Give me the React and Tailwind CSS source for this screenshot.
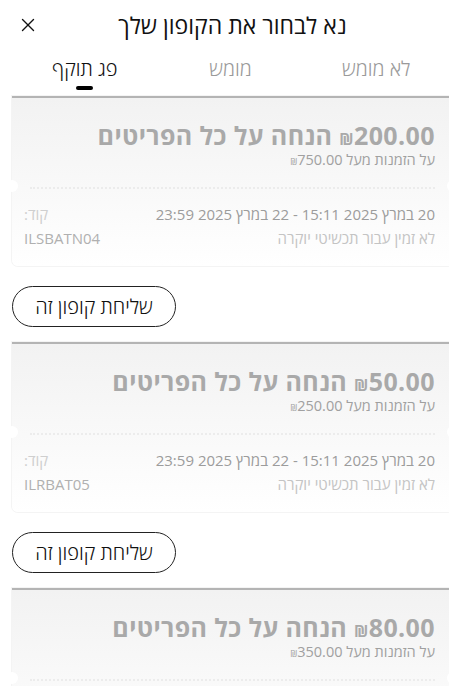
import { X } from "lucide-react";

const tabs = [
  { key: "unused", label: "לא מומש" },
  { key: "used", label: "מומש" },
  { key: "expired", label: "פג תוקף" },
];

const coupons = [
  {
    id: 1,
    amount: "200.00",
    minOrder: "750.00",
    dates: "20 במרץ 2025 15:11 - 22 במרץ 2025 23:59",
    note: "לא זמין עבור תכשיטי יוקרה",
    code: "ILSBATN04",
  },
  {
    id: 2,
    amount: "50.00",
    minOrder: "250.00",
    dates: "20 במרץ 2025 15:11 - 22 במרץ 2025 23:59",
    note: "לא זמין עבור תכשיטי יוקרה",
    code: "ILRBAT05",
  },
  {
    id: 3,
    amount: "80.00",
    minOrder: "350.00",
    dates: "20 במרץ 2025 15:11 - 22 במרץ 2025 23:59",
    note: "לא זמין עבור תכשיטי יוקרה",
    code: "ILRBAT06",
  },
];

// the shekel sign renders small in the original
const Shekel = () => <span className="text-[0.62em] leading-none">₪</span>;

function CouponCard({ coupon }) {
  return (
    <div className="ml-[12px] mr-[-4px] border-t-2 border-[#b4b4b4] bg-gradient-to-b from-[#f2f2f2] to-[#ffffff] rounded-b-[6px] shadow-[0_0_0_1px_#f4f4f4]">
      <div className="pr-[18px] pl-4 pt-[23px] pb-[16px]">
        <h3 className="text-[25px] leading-[28px] font-bold tracking-[0.4px] text-[#a9a9a9]">
          <Shekel />
          {coupon.amount} הנחה על כל הפריטים
        </h3>
        <p className="text-[14.5px] leading-[22px] text-[#a0a0a0]">
          על הזמנות מעל <Shekel />
          {coupon.minOrder}
        </p>
      </div>
      <div className="relative h-[4px]">
        <div className="mx-[18px] border-t-2 border-dotted border-[#ececec]" />
        <span className="absolute right-[-6px] top-[-7px] h-[12px] w-[12px] rounded-full bg-white" />
        <span className="absolute left-[-6px] top-[-7px] h-[12px] w-[12px] rounded-full bg-white" />
      </div>
      <div className="flex justify-between pr-[18px] pl-[12px] pt-[11px] pb-[16px] text-[15px] leading-[24px]">
        <div>
          <p className="text-[#9c9c9c]">{coupon.dates}</p>
          <p className="text-[#c4c4c4]">{coupon.note}</p>
        </div>
        <div className="text-left">
          <p className="text-[#cfcfcf]">קוד:</p>
          <p className="text-[#b0b0b0]">{coupon.code}</p>
        </div>
      </div>
    </div>
  );
}

export default function App() {
  const activeTab = "expired";

  return (
    <div
      dir="rtl"
      className="h-[686px] w-[449px] overflow-hidden bg-white"
      style={{ fontFamily: '"Open Sans", "DejaVu Sans", sans-serif' }}
    >
      <div className="flex h-[50px] items-center pl-[16px]">
        <h1 className="flex-1 pr-[24px] text-center text-[23px] font-medium text-[#111]">נא לבחור את הקופון שלך</h1>
        <button type="button" className="flex h-[24px] w-[24px] items-center justify-center text-[#111]">
          <X size={22} strokeWidth={1.5} />
        </button>
      </div>

      <div className="flex pl-[12px]">
        {tabs.map((tab) => (
          <button
            key={tab.key}
            type="button"
            className={`flex h-[46px] flex-1 flex-col items-center pt-[5px] text-[20px] font-light leading-[28px] ${
              activeTab === tab.key ? "text-[#111]" : "text-[#9a9a9a]"
            }`}
          >
            {tab.label}
            {activeTab === tab.key ? <span className="mt-[3px] h-[4px] w-[17px] rounded-full bg-black" /> : null}
          </button>
        ))}
      </div>

      <div>
        {coupons.map((coupon) => (
          <div key={coupon.id} className="pb-[15px]">
            <CouponCard coupon={coupon} />
            <button
              type="button"
              className="mr-auto ml-[12px] mt-[20px] flex h-[41px] w-[164px] items-center justify-center rounded-full border border-[#222] text-[20px] font-light text-[#111]"
            >
              שליחת קופון זה
            </button>
          </div>
        ))}
      </div>
    </div>
  );
}
